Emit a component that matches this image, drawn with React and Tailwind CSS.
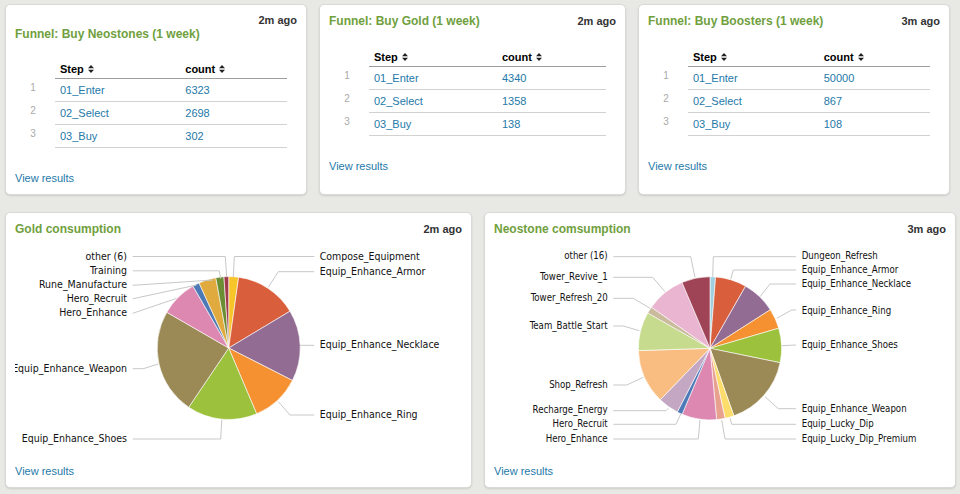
import React from "react";

const LINK = "text-[#2479a9]";

const FUNNELS = [
  { title: "Funnel: Buy Neostones (1 week)", time: "2m ago", counts: ["6323", "2698", "302"], wrap: true, w: "w-[302px]" },
  { title: "Funnel: Buy Gold (1 week)", time: "2m ago", counts: ["4340", "1358", "138"], w: "w-[307px]" },
  { title: "Funnel: Buy Boosters (1 week)", time: "3m ago", counts: ["50000", "867", "108"], w: "w-[312px]" },
];

const STEPS = ["01_Enter", "02_Select", "03_Buy"];

// slices: [color, startDeg, endDeg], clockwise from 12 o'clock
const GOLD = {
  cx: 213.7, cy: 111, r: 71.5, fs: 10.5,
  slices: [
    ["#f7c42a", 0, 8],
    ["#d95e3c", 8, 59],
    ["#936c94", 59, 117],
    ["#f59131", 117, 157],
    ["#9cc13d", 157, 214],
    ["#9b8a55", 214, 300],
    ["#dd88b1", 300, 330],
    ["#4d7ab7", 330, 335.5],
    ["#e1aa3e", 335.5, 349.6],
    ["#6b8e34", 349.6, 356.2],
    ["#a23a4e", 356.2, 360],
  ],
  left: 112,
  right: 304.7,
  labels: [
    ["other (6)", "l", 19, [[117.7, 19.5], [210.3, 19.5], [211.7, 40.3]]],
    ["Training", "l", 33.3, [[117.7, 33.8], [204.3, 33.8], [205.7, 41.7]]],
    ["Rune_Manufacture", "l", 47.3, [[117.7, 48.3], [198, 43]]],
    ["Hero_Recruit", "l", 61.3, [[117.7, 61.8], [181.7, 48]]],
    ["Hero_Enhance", "l", 75.3, [[117.7, 76.3], [161.7, 61.3]]],
    ["Equip_Enhance_Weapon", "l", 131.3, [[117.7, 131.7], [128.3, 131.7], [143.3, 127]]],
    ["Equip_Enhance_Shoes", "l", 201.3, [[117.7, 202], [205.7, 202], [206.7, 183]]],
    ["Compose_Equipment", "r", 19, [[299.3, 19.5], [219.3, 19.5], [218.3, 40.3]]],
    ["Equip_Enhance_Armor", "r", 34, [[299.3, 34.7], [263.3, 34.7], [253.3, 50.3]]],
    ["Equip_Enhance_Necklace", "r", 107.3, [[299.3, 108.3], [285, 108.3]]],
    ["Equip_Enhance_Ring", "r", 177.3, [[299.3, 178], [275, 178], [263.3, 164.7]]],
  ],
};

const NEO = {
  cx: 216, cy: 111.3, r: 71.6, fs: 9.6,
  slices: [
    ["#9fcfe0", 0, 4.5],
    ["#d95e3c", 4.5, 29.8],
    ["#936c94", 29.8, 57.4],
    ["#f59131", 57.4, 73.7],
    ["#9cc13d", 73.7, 101.6],
    ["#9b8a55", 101.6, 160.5],
    ["#fcdc6b", 160.5, 167.9],
    ["#e9a18f", 167.9, 174.7],
    ["#dd88b1", 174.7, 202.9],
    ["#4d7ab7", 202.9, 207.2],
    ["#c3a7c3", 207.2, 224],
    ["#f9bd82", 224, 268.2],
    ["#c6db8e", 268.2, 299.6],
    ["#c9bb9c", 299.6, 305.1],
    ["#e9b5d0", 305.1, 337],
    ["#9f4357", 337, 360],
  ],
  left: 113.7,
  right: 307.7,
  labels: [
    ["other (16)", "l", 18.7, [[119.3, 19.7], [196.7, 19.7], [201, 40.3]]],
    ["Tower_Revive_1", "l", 39.7, [[119.3, 40.3], [158.7, 40.3], [171, 54.7]]],
    ["Tower_Refresh_20", "l", 60.7, [[119.3, 61.3], [139.3, 61.3], [156, 71.3]]],
    ["Team_Battle_Start", "l", 88.7, [[119.3, 89], [129.3, 89], [145.3, 93.7]]],
    ["Shop_Refresh", "l", 147.3, [[119.3, 148], [132.7, 148], [149.3, 140.3]]],
    ["Recharge_Energy", "l", 172.7, [[119.3, 173.7], [172, 173.7], [174.3, 171.3]]],
    ["Hero_Recruit", "l", 186.7, [[119.3, 187.3], [182, 187.3], [186.7, 177]]],
    ["Hero_Enhance", "l", 201.7, [[119.3, 202], [204.3, 202], [206, 183]]],
    ["Dungeon_Refresh", "r", 18.7, [[302, 19.7], [219.3, 19.7], [218.7, 39.7]]],
    ["Equip_Enhance_Armor", "r", 32.7, [[302, 33], [239.3, 33], [236.7, 42.3]]],
    ["Equip_Enhance_Necklace", "r", 46.7, [[302, 47], [276, 47], [266, 59.7]]],
    ["Equip_Enhance_Ring", "r", 73.7, [[302, 73], [297.7, 73], [282.7, 81.3]]],
    ["Equip_Enhance_Shoes", "r", 107.7, [[302, 108], [287.7, 108.7]]],
    ["Equip_Enhance_Weapon", "r", 171.7, [[302, 171.7], [284.3, 171.7], [271, 159.7]]],
    ["Equip_Lucky_Dip", "r", 186.7, [[302, 187.3], [237.7, 187.3], [236, 181.3]]],
    ["Equip_Lucky_Dip_Premium", "r", 201.7, [[302, 202], [231, 202], [227.7, 183]]],
  ],
};

function SortIcon() {
  return (
    <svg width="6" height="8" viewBox="0 0 6 8" className="ml-[4px]">
      <path d="M0 3.2 L3 0 L6 3.2 Z M0 4.8 L3 8 L6 4.8 Z" fill="#222" />
    </svg>
  );
}

function FunnelCard({ f }) {
  return (
    <div className={`${f.w} h-[191px] rounded-[5px] border border-[#d9d9d5] bg-white px-[9px] pt-[8px] shadow-[0_1px_2px_rgba(0,0,0,0.12)]`}>
      {f.wrap ? (
        <>
          <div className="text-right text-[11px] font-bold leading-[14px] text-[#333]">{f.time}</div>
          <div className="text-[12px] font-bold leading-[14px] text-[#70a03e]">{f.title}</div>
        </>
      ) : (
        <div className="flex h-[16px] items-center justify-between">
          <span className="text-[12px] font-bold text-[#70a03e]">{f.title}</span>
          <span className="text-[11px] font-bold text-[#333]">{f.time}</span>
        </div>
      )}

      <div className="mt-[19px] flex">
        <div className="w-[40px] shrink-0" />
        <div className="mr-[10px] flex h-[19px] flex-1 items-center border-b border-[#9d9d9d] text-[11px] font-bold text-black">
          <div className="flex w-[54%] items-center pl-[5px]">Step<SortIcon /></div>
          <div className="flex items-center pl-[5px]">count<SortIcon /></div>
        </div>
      </div>

      {STEPS.map((s, i) => (
        <div key={s} className="flex h-[23px]">
          <div className="w-[40px] shrink-0 pr-[4px] pt-[4px] text-center text-[10px] leading-[10px] text-[#aaa]">{i + 1}</div>
          <div className={`mr-[10px] flex flex-1 items-center border-b border-[#d2d2d2] text-[11px] ${LINK}`}>
            <div className="w-[54%] pl-[5px]">{s}</div>
            <div className="pl-[5px]">{f.counts[i]}</div>
          </div>
        </div>
      ))}

      <div className={`mt-[23px] text-[11px] leading-[15px] ${LINK}`}>View results</div>
    </div>
  );
}

function pt(cx, cy, r, deg) {
  const a = (deg * Math.PI) / 180;
  return [cx + r * Math.sin(a), cy - r * Math.cos(a)];
}

function Pie({ data, width }) {
  const { cx, cy, r } = data;
  return (
    <svg width={width} height="215" className="block overflow-hidden font-['DejaVu_Sans_Condensed','DejaVu_Sans',sans-serif] font-stretch-condensed">
      {data.slices.map(([color, a0, a1], i) => {
        const [x0, y0] = pt(cx, cy, r, a0);
        const [x1, y1] = pt(cx, cy, r, a1);
        const large = a1 - a0 > 180 ? 1 : 0;
        return (
          <path
            key={i}
            d={`M${cx} ${cy} L${x0} ${y0} A${r} ${r} 0 ${large} 1 ${x1} ${y1} Z`}
            fill={color}
            stroke="#fff"
            strokeWidth="0.6"
          />
        );
      })}
      {data.labels.map(([text, side, y, line]) => (
        <g key={text}>
          <polyline points={line.map((p) => p.join(",")).join(" ")} fill="none" stroke="#c8c8c8" strokeWidth="1" />
          <text
            x={side === "l" ? data.left : data.right}
            y={y}
            dy="0.35em"
            textAnchor={side === "l" ? "end" : "start"}
            fontSize={data.fs}
            fill="#111"
          >
            {text}
          </text>
        </g>
      ))}
    </svg>
  );
}

function PieCard({ title, time, data, w, inner }) {
  return (
    <div className={`${w} h-[276px] rounded-[5px] border border-[#d9d9d5] bg-white px-[9px] pt-[8px] shadow-[0_1px_2px_rgba(0,0,0,0.12)]`}>
      <div className="flex h-[16px] items-center justify-between">
        <span className="text-[12px] font-bold text-[#70a03e]">{title}</span>
        <span className="text-[11px] font-bold text-[#333]">{time}</span>
      </div>
      <Pie data={data} width={inner} />
      <div className={`mt-[12px] text-[11px] leading-[15px] ${LINK}`}>View results</div>
    </div>
  );
}

export default function App() {
  return (
    <div className="h-[494px] w-[960px] overflow-hidden bg-[#e8e8e4] pl-[5px] pt-[4px] font-['Liberation_Sans',Arial,sans-serif]">
      <div className="flex gap-[12px]">
        {FUNNELS.map((f) => (
          <FunnelCard key={f.title} f={f} />
        ))}
      </div>
      <div className="mt-[17px] flex gap-[12px]">
        <PieCard title="Gold consumption" time="2m ago" data={GOLD} w="w-[467px]" inner={447} />
        <PieCard title="Neostone comsumption" time="3m ago" data={NEO} w="w-[472px]" inner={452} />
      </div>
    </div>
  );
}
